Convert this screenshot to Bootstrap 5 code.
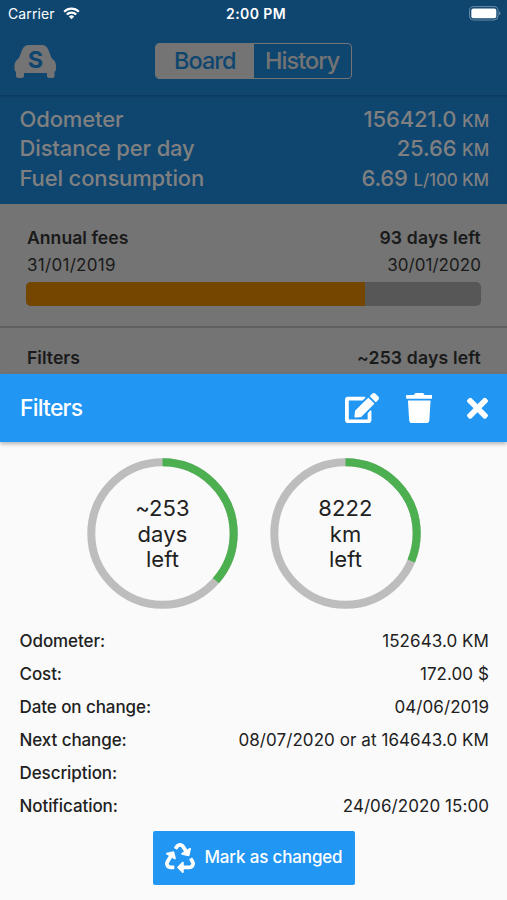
<!DOCTYPE html>
<html lang="en">
<head>
<meta charset="utf-8">
<meta name="viewport" content="width=device-width, initial-scale=1">
<title>Car service board</title>
<link href="https://cdn.jsdelivr.net/npm/bootstrap@5.3.0/dist/css/bootstrap.min.css" rel="stylesheet">
<style>
  body { font-family: Inter, "Liberation Sans", sans-serif; background: #fafafa; color: #212121; height: 900px; overflow: hidden; }
  span { white-space: nowrap; }
  svg { display: block; flex: none; }
  .board { background: #747474; height: 374px; color: #1a1a1a; }
  .blue-dim { background: #0f4670; color: #808080; }
  .status { height: 27px; color: #fff; font-size: 14px; padding: 0 6px 0 8px; }
  .status > div { flex: 1 1 0; }
  .carrier { letter-spacing: .1px; }
  .status .clock { font-weight: 600; letter-spacing: .4px; margin-left: 3px; }
  .topnav { height: 68px; padding: 0 14px; }
  .topnav > div { flex: 1 1 0; }
  .topnav > .seg { flex: 0 0 197px; height: 36px; border: 1px solid #747474; border-radius: 4px; font-size: 23.5px; font-weight: 500; letter-spacing: -.95px; color: #747474; overflow: hidden; }
  .seg .on { background: #747474; color: #0f4670; }
  .summary { height: 109px; padding: 9px 18px 0 20px; border-top: 1px solid #0c3c61; box-shadow: inset 0 2px 2px -1px #0c3c61; font-size: 22px; font-weight: 500; line-height: 29.4px; letter-spacing: -.14px; }
  .summary > div { height: 29.4px; margin-left: -.5px; }
  .summary small { font-size: 17px; font-weight: 500; line-height: 1; }
  .fees { height: 122px; padding: 22px 26px 0 27px; }
  .bold-line { font-size: 17.6px; font-weight: 600; line-height: 24px; letter-spacing: .02px; }
  .bold-line span + span { letter-spacing: .17px; }
  .date-line { font-size: 17px; line-height: 24px; padding-top: 3px; letter-spacing: .3px; }
  .date-line span + span { letter-spacing: .05px; }
  .fee-bar { height: 24px; background: #575757; border-radius: 5px; margin: 5px 0 0 -1px; }
  .fee-bar .progress-bar { background: #754600; }
  .filters-row { border-top: 2px solid #606060; padding: 18px 26px 0 27px; height: 48px; }
  .sheet-head { height: 68px; background: #2196f3; color: #fff; padding: 0 19px 0 20px; box-shadow: 0 2px 4px rgba(0,0,0,.28); }
  .sheet-title { font-size: 23px; font-weight: 500; letter-spacing: -.8px; }
  .dials { padding: 16px 86px 0 87px; }
  .dial { width: 151px; height: 151px; display: grid; }
  .dial > * { grid-area: 1 / 1; }
  .dial-text { font-size: 22px; line-height: 25.6px; z-index: 1; padding-top: 2px; letter-spacing: .1px; }
  .details { padding: 16px 18px 0 19.5px; font-size: 17px; line-height: 33px; letter-spacing: .07px; }
  .details .name { font-weight: 500; letter-spacing: -.08px; }
  .mark-btn { width: 202px; height: 54px; margin-top: 8px; background: #2196f3; color: #fff; border-radius: 2px; font-size: 17px; font-weight: 500; letter-spacing: -.16px; padding: 0 12px; gap: 10px; }
</style>
</head>
<body>
<main class="board">
  <header class="blue-dim">
    <div class="status d-flex align-items-center">
      <div class="d-flex align-items-center"><span class="carrier">Carrier</span>
        <svg class="ms-2" width="17" height="13" viewBox="0 0 18 13" fill="none" stroke="#fff" stroke-width="2.3"><path d="M1.2 4.6a11.1 11.1 0 0 1 15.6 0M4 7.6a7.2 7.2 0 0 1 10 0"/><path d="M9 12.6 6.2 9.8a4 4 0 0 1 5.6 0z" fill="#fff" stroke="none"/></svg>
      </div>
      <span class="clock">2:00 PM</span>
      <div class="d-flex justify-content-end">
        <svg width="33" height="15" viewBox="0 0 33 15"><rect x="1.5" y=".6" width="28.5" height="13.4" rx="4" fill="none" stroke="#6b8ca6"/><rect x="3.3" y="2.5" width="25" height="9.7" rx="2" fill="#fff"/><path d="M31.3 5.2q2 2.1 0 4.2z" fill="#8aa6bb"/></svg>
      </div>
    </div>
    <nav class="topnav d-flex align-items-center">
      <div><svg width="43" height="35" viewBox="0 0 43 35"><path fill="#747474" d="M5 14 8.500 5Q10.500 1 15 1H28Q32 1 34 5L37.500 14Q42 17 42 22V25Q42 27 40.500 28V32Q40.500 34 38.500 34H35Q33 34 33 32V29H10V32Q10 34 8 34H4.500Q2 34 2 32V28Q.5 27 .5 25V22Q.5 17 5 14Z"/><text x="21.500" y="24" text-anchor="middle" font-family="Inter" font-size="23.500" font-weight="700" fill="#0f4670">S</text></svg></div>
      <div class="seg d-flex">
        <span class="on w-50 d-flex align-items-center justify-content-center">Board</span>
        <span class="w-50 d-flex align-items-center justify-content-center">History</span>
      </div>
      <div></div>
    </nav>
    <section class="summary">
      <div class="d-flex justify-content-between"><span>Odometer</span><span>156421.0 <small>KM</small></span></div>
      <div class="d-flex justify-content-between"><span>Distance per day</span><span>25.66 <small>KM</small></span></div>
      <div class="d-flex justify-content-between"><span>Fuel consumption</span><span>6.69 <small>L/100 KM</small></span></div>
    </section>
  </header>
  <section class="fees">
    <div class="bold-line d-flex justify-content-between"><span>Annual fees</span><span>93 days left</span></div>
    <div class="date-line d-flex justify-content-between"><span>31/01/2019</span><span>30/01/2020</span></div>
    <div class="progress fee-bar"><div class="progress-bar" style="width:74.5%"></div></div>
  </section>
  <section class="filters-row bold-line d-flex justify-content-between"><span>Filters</span><span>~253 days left</span></section>
</main>
<section class="sheet">
  <header class="sheet-head d-flex align-items-center">
    <span class="sheet-title me-auto">Filters</span>
    <svg width="34" height="30.200" viewBox="0 0 576 512" fill="#fff"><path d="M402.6 83.2l90.2 90.2c3.8 3.8 3.8 10 0 13.8L274.4 405.6l-92.8 10.3c-12.4 1.4-22.9-9.1-21.5-21.5l10.3-92.8L388.800 83.200c3.800-3.800 10-3.800 13.800 0zm162-22.900l-48.800-48.800c-15.200-15.200-39.900-15.200-55.200 0l-35.400 35.400c-3.800 3.800-3.800 10 0 13.800l90.200 90.200c3.800 3.800 10 3.800 13.800 0l35.400-35.400c15.200-15.300 15.200-40 0-55.200zM384 346.200V448H64V128h229.800c3.200 0 6.200-1.300 8.500-3.500l40-40c7.600-7.600 2.200-20.500-8.500-20.500H48C21.500 64 0 85.500 0 112v352c0 26.500 21.500 48 48 48h352c26.500 0 48-21.500 48-48V306.200c0-10.700-12.900-16-20.500-8.500l-40 40c-2.200 2.300-3.500 5.300-3.500 8.500z"/></svg>
    <svg width="26.500" height="30.200" viewBox="0 0 448 512" fill="#fff" style="margin-left:27px"><path d="M432 32H312l-9.400-18.700A24 24 0 0 0 281.100 0H166.800a23.720 23.720 0 0 0-21.400 13.300L136 32H16A16 16 0 0 0 0 48v32a16 16 0 0 0 16 16h416a16 16 0 0 0 16-16V48a16 16 0 0 0-16-16zM53.200 467a48 48 0 0 0 47.900 45h245.800a48 48 0 0 0 47.900-45L416 128H32z"/></svg>
    <svg width="21" height="30.500" viewBox="0 0 352 512" fill="#fff" style="margin-left:35px"><path d="M242.720 256l100.070-100.070c12.280-12.280 12.280-32.190 0-44.480l-22.240-22.240c-12.280-12.280-32.190-12.280-44.480 0L176 189.280 75.930 89.210c-12.280-12.280-32.190-12.280-44.480 0L9.210 111.450c-12.280 12.280-12.280 32.190 0 44.480L109.280 256 9.210 356.070c-12.280 12.280-12.280 32.190 0 44.480l22.240 22.240c12.280 12.280 32.200 12.280 44.480 0L176 322.720l100.070 100.070c12.280 12.280 32.200 12.280 44.480 0l22.240-22.240c12.280-12.280 12.280-32.190 0-44.480L242.720 256z"/></svg>
  </header>
  <div class="dials d-flex justify-content-between">
    <div class="dial">
      <svg width="151" height="151" viewBox="0 0 151 151" fill="none" stroke-width="8"><circle cx="75.500" cy="75.500" r="71.200" stroke="#bdbdbd"/><circle cx="75.500" cy="75.500" r="71.200" stroke="#4caf50" pathLength="100" stroke-dasharray="36.500 100" transform="rotate(-90 75.500 75.500)"/></svg>
      <div class="dial-text align-self-center text-center">~253<br>days<br>left</div>
    </div>
    <div class="dial">
      <svg width="151" height="151" viewBox="0 0 151 151" fill="none" stroke-width="8"><circle cx="75.500" cy="75.500" r="71.200" stroke="#bdbdbd"/><circle cx="75.500" cy="75.500" r="71.200" stroke="#4caf50" pathLength="100" stroke-dasharray="31.300 100" transform="rotate(-90 75.500 75.500)"/></svg>
      <div class="dial-text align-self-center text-center">8222<br>km<br>left</div>
    </div>
  </div>
  <div class="details">
    <div class="d-flex justify-content-between"><span class="name">Odometer:</span><span>152643.0 KM</span></div>
    <div class="d-flex justify-content-between"><span class="name">Cost:</span><span>172.00 $</span></div>
    <div class="d-flex justify-content-between"><span class="name">Date on change:</span><span>04/06/2019</span></div>
    <div class="d-flex justify-content-between"><span class="name">Next change:</span><span>08/07/2020 or at 164643.0 KM</span></div>
    <div class="d-flex justify-content-between"><span class="name">Description:</span></div>
    <div class="d-flex justify-content-between"><span class="name">Notification:</span><span>24/06/2020 15:00</span></div>
  </div>
  <button type="button" class="mark-btn btn d-flex align-items-center mx-auto border-0">
    <svg width="30" height="30" viewBox="0 0 512 512" fill="#fff"><path d="M184.561 261.903c3.232 13.997-12.123 24.635-24.068 17.168l-40.736-25.455-50.867 81.402C55.606 356.273 70.960 384 96.012 384H148c6.627 0 12 5.373 12 12v40c0 6.627-5.373 12-12 12H96.115c-75.334 0-121.302-83.048-81.408-146.880l50.822-81.388-40.725-25.448c-12.081-7.547-8.966-25.961 4.879-29.158l110.237-25.450c8.611-1.988 17.201 3.381 19.189 11.990l25.452 110.237zm98.561-182.915l41.289 66.076-40.740 25.457c-12.051 7.528-9 25.953 4.879 29.158l110.237 25.450c8.672 1.999 17.215-3.438 19.189-11.990l25.450-110.237c3.197-13.844-11.990-24.719-24.068-17.168l-40.687 25.424-41.263-66.082c-37.521-60.033-125.209-60.171-162.816 0l-17.963 28.766c-3.510 5.620-1.800 13.021 3.820 16.533l33.919 21.195c5.620 3.512 13.024 1.803 16.536-3.817l17.961-28.743c12.712-20.341 41.973-19.676 54.257-.022zM497.288 301.120l-27.515-44.065c-3.511-5.623-10.916-7.334-16.538-3.821l-33.861 21.159c-5.620 3.512-7.330 10.915-3.818 16.536l27.564 44.112c13.257 21.211-2.057 48.960-27.136 48.960H320V336.020c0-14.213-17.242-21.383-27.313-11.313l-80 79.981c-6.249 6.248-6.249 16.379 0 22.627l80 79.989C302.689 517.308 320 510.300 320 495.989V448h95.880c75.274 0 121.335-82.997 81.408-146.880z"/></svg>
    <span>Mark as changed</span>
  </button>
</section>
<script src="https://cdn.jsdelivr.net/npm/bootstrap@5.3.0/dist/js/bootstrap.bundle.min.js"></script>
</body>
</html>
